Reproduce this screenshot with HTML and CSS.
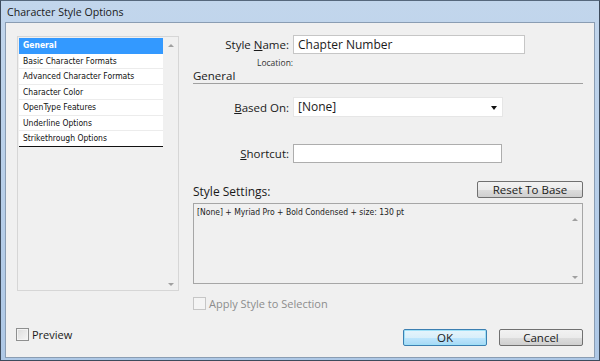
FILE: index.html
```html
<!DOCTYPE html>
<html>
<head>
<meta charset="utf-8">
<link rel="stylesheet" href="styles.css">
</head>
<body>
<div class="window">
  <div class="titlebar">Character Style Options</div>
  <div class="client">
    <div class="main">
      <div class="listbox">
        <div class="items">
          <div class="item selected">General</div>
          <div class="item">Basic Character Formats</div>
          <div class="item">Advanced Character Formats</div>
          <div class="item">Character Color</div>
          <div class="item">OpenType Features</div>
          <div class="item">Underline Options</div>
          <div class="item last">Strikethrough Options</div>
        </div>
        <div class="vscroll">
          <span class="arr up"></span>
          <span class="arr down"></span>
        </div>
      </div>
      <div class="panel">
        <div class="row name-row">
          <label class="lbl">Style <u>N</u>ame:</label>
          <div class="input wide">Chapter Number</div>
        </div>
        <div class="location">Location:</div>
        <div class="section">General</div>
        <div class="row based-row">
          <label class="lbl"><u>B</u>ased On:</label>
          <div class="select">[None]<span class="caret"></span></div>
        </div>
        <div class="row shortcut-row">
          <label class="lbl"><u>S</u>hortcut:</label>
          <div class="input short"></div>
        </div>
        <div class="settings-head">
          <span class="settings-label">Style Settings:</span>
          <button class="btn reset">Reset To Base</button>
        </div>
        <div class="textarea">
          <div class="ta-text">[None] + Myriad Pro + Bold Condensed + size: 130 pt</div>
          <div class="vscroll ta-scroll">
            <span class="arr up"></span>
            <span class="arr down"></span>
          </div>
        </div>
        <div class="apply"><span class="cb disabled"></span><span>Apply Style to Selection</span></div>
      </div>
    </div>
    <div class="footer">
      <div class="preview"><span class="cb"></span><span>Preview</span></div>
      <div class="buttons">
        <button class="btn ok">OK</button>
        <button class="btn cancel">Cancel</button>
      </div>
    </div>
  </div>
</div>
</body>
</html>
```
FILE: styles.css
```css
* { box-sizing: border-box; }
html, body { margin: 0; padding: 0; }
body { width: 600px; height: 361px; overflow: hidden; background: #f0f0f0; font-family: "Open Sans", "Noto Sans", sans-serif; }

.window {
  width: 600px; height: 361px;
  background: linear-gradient(#c2d6ec, #aec8e6);
  border: 1px solid #3d4b5c;
  border-top-color: #56687c;
  display: flex; flex-direction: column;
  padding: 0 4px 4px 4px;
}
.titlebar {
  height: 21px;
  font-size: 10.6px;
  color: #1a1a1a;
  padding-left: 2px;
  line-height: 22px;
}
.client {
  flex: 1;
  background: #f0f0f0;
  border: 1px solid #8a9db3;
  display: flex; flex-direction: column;
}

.main { display: flex; flex: 1; }

.listbox {
  margin: 13px 0 0 11px;
  width: 162px; height: 255px;
  border: 1px solid #d6d6d6;
  background: #f0f0f0;
  display: flex;
  padding: 1px 0 1px 1px;
}
.items { flex: 1; }
.item {
  height: 15.5px;
  font-family: "DejaVu Sans Condensed", "DejaVu Sans", sans-serif;
  font-size: 8.5px;
  line-height: 15px;
  padding-left: 4px;
  color: #111;
  background: #fff;
  border-bottom: 1px solid #ececec;
}
.item.selected { background: #3399ff; color: #fff; font-weight: bold; border-bottom-color: #3399ff; }
.item.last { border-bottom: 1px solid #111; }

.vscroll {
  width: 15px;
  display: flex; flex-direction: column; justify-content: space-between;
  align-items: center;
  padding: 6px 0 3px;
}
.arr { width: 0; height: 0; border-left: 3px solid transparent; border-right: 3px solid transparent; }
.arr.up { border-bottom: 3px solid #a0a0a0; }
.arr.down { border-top: 3px solid #a0a0a0; }

.panel {
  margin-left: 14px;
  width: 390px;
  display: flex; flex-direction: column;
  font-size: 11.5px;
  color: #1a1a1a;
}
.row { display: flex; align-items: center; }
.lbl { width: 100px; text-align: right; padding-right: 4px; }
.lbl u { text-decoration: underline; }
.name-row { margin-top: 12px; }
.input {
  height: 19px; background: #fff;
  border: 1px solid #c6c6c6;
  padding-left: 4px; line-height: 17px;
  font-size: 12px;
}
.input.wide { width: 232px; }
.input.short { width: 209px; border-color: #adadad; }
.location {
  font-size: 8.5px; color: #333;
  margin: 3px 0 0 64px;
  height: 11px;
}
.section {
  margin-top: 1px;
  height: 15px; line-height: 13px;
  border-bottom: 1px solid #a0a0a0;
  font-size: 11.5px;
}
.based-row { margin-top: 13px; }
.select {
  width: 210px; height: 20px; background: #fff;
  border: 1px solid #e6e6e6;
  padding-left: 4px; line-height: 18px;
  position: relative; font-size: 12px;
}
.caret {
  position: absolute; right: 5px; top: 8px;
  border-left: 3.5px solid transparent; border-right: 3.5px solid transparent; border-top: 4px solid #111;
}
.shortcut-row { margin-top: 27px; }

.settings-head { display: flex; justify-content: space-between; align-items: flex-end; margin-top: 17px; height: 18px; }
.settings-label { font-size: 12px; line-height: 14px; position: relative; top: 1px; }
.btn {
  font-family: "Open Sans", "Noto Sans", sans-serif;
  font-size: 11.5px; color: #1a1a1a;
  height: 17px; padding: 0; line-height: 14px;
  border: 1px solid #707070; border-radius: 2px;
  background: linear-gradient(#f2f2f2 0%, #ebebeb 50%, #dddddd 51%, #cfcfcf 100%);
}
.btn.reset { width: 106px; margin-right: 0; }
.textarea {
  margin-top: 5px;
  width: 390px; height: 81px;
  border: 1px solid #a6a6a6;
  display: flex;
  background: #f0f0f0;
}
.ta-text { flex: 1; font-family: "DejaVu Sans Condensed", "DejaVu Sans", sans-serif; font-size: 8.5px; padding: 3px 0 0 3px; color: #222; }
.ta-scroll { padding: 14px 0 4px; }

.apply { display: flex; align-items: center; margin-top: 12px; color: #8d8d8d; font-size: 11px; }
.cb {
  width: 13px; height: 13px; display: inline-block;
  border: 1px solid #8e8f8f;
  background: linear-gradient(135deg, #dcdcdc, #f6f6f6);
  box-shadow: inset 0 0 0 1px #f4f4f4;
  margin-right: 3px;
}
.cb.disabled { border-color: #c6c6c6; background: #f4f4f4; }

.footer { height: 46px; display: flex; justify-content: space-between; padding: 0 11px 0 10px; }
.preview { display: flex; align-items: center; font-size: 11px; height: 14px; margin-top: 16px; color: #1a1a1a; }
.buttons { display: flex; gap: 12px; margin-top: 18px; }
.btn.ok, .btn.cancel { width: 84px; height: 17px; }
.btn.ok {
  border-color: #3c7fb1;
  background: linear-gradient(#e5f4fc 0%, #d9effa 50%, #bee6fd 51%, #a7d9f5 100%);
  box-shadow: inset 0 0 0 1px #9fe0f7;
}
```
